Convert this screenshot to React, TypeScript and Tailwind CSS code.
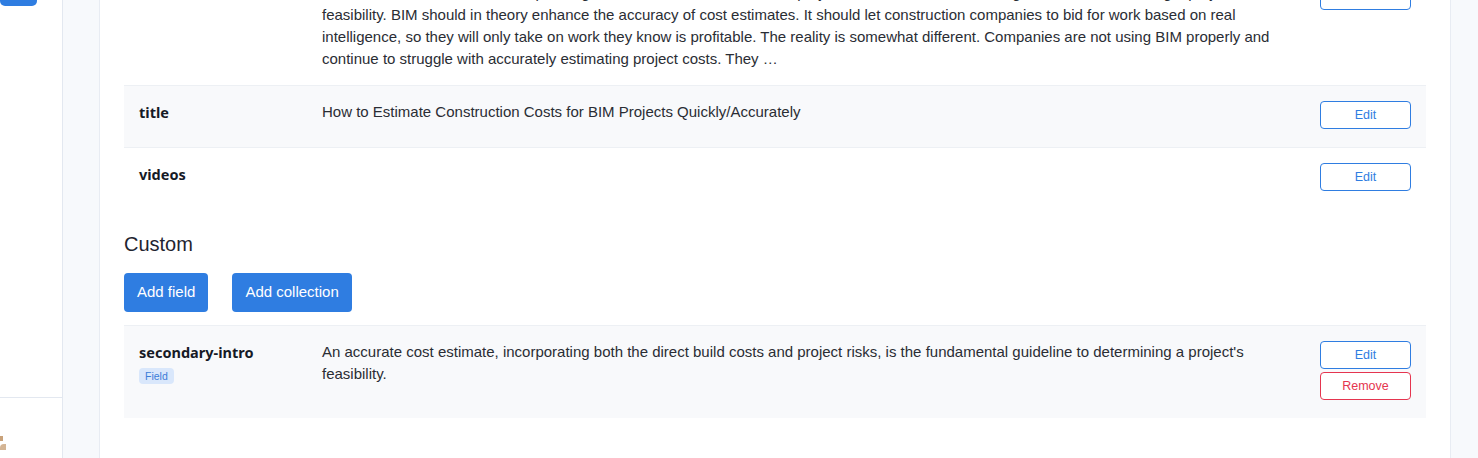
const intro =
  "An accurate cost estimate, incorporating both the direct build costs and project risks, is the fundamental guideline to determining a project's feasibility. BIM should in theory enhance the accuracy of cost estimates. It should let construction companies to bid for work based on real intelligence, so they will only take on work they know is profitable. The reality is somewhat different. Companies are not using BIM properly and continue to struggle with accurately estimating project costs. They …";

const sans = "font-['Liberation_Sans',Arial,sans-serif]";
const label = "font-['Noto_Sans','Open_Sans',sans-serif] font-bold";

function EditButton() {
  return (
    <button className="h-7 w-[91px] rounded border border-[#2f7de1] bg-white text-[12.5px] text-[#2f7de1]">
      Edit
    </button>
  );
}

function RemoveButton() {
  return (
    <button className="h-7 w-[91px] rounded border border-[#e5354f] bg-white text-[12.5px] text-[#e5354f]">
      Remove
    </button>
  );
}

function FieldRow({
  name,
  value,
  gray,
  badge,
  remove,
}: {
  name: string;
  value?: string;
  gray?: boolean;
  badge?: boolean;
  remove?: boolean;
}) {
  return (
    <div
      className={`flex border-t border-[#edf0f4] py-[15px] px-[15px] ${
        gray ? "bg-[#f8f9fb]" : "bg-white"
      }`}
    >
      <div className="w-[183px] shrink-0">
        <div className={`${label} text-[14.5px] leading-[22px] text-[#161a26]`}>{name}</div>
        {badge && (
          <span className="mt-[4px] inline-block rounded-[4px] bg-[#d9e7fb] px-[6px] text-[10.5px] leading-[16px] text-[#3b7dd8]">
            Field
          </span>
        )}
      </div>
      <div className="w-[965px] shrink-0 text-[15px] leading-[22px] text-[#2a2d34]">{value}</div>
      <div className="ml-auto flex flex-col gap-[3px] pb-[3px]">
        <EditButton />
        {remove && <RemoveButton />}
      </div>
    </div>
  );
}

export default function App() {
  return (
    <div className={`flex h-[458px] overflow-hidden bg-[#f7f9fc] ${sans}`}>
      <aside className="flex w-[63px] shrink-0 flex-col border-r border-[#e3e8f0] bg-white">
        <div className="h-[6px] w-[37px] rounded-b-[5px] bg-[#2f7de1]" />
        <div className="mt-[391px] border-t border-[#e3e8f0]" />
        <div className="mt-[38px] h-[5px] w-[3px] bg-[#c9a27a]" />
        <div className="mt-[3px] h-[6px] w-[6px] rounded-tl-[4px] bg-[#c9a27a] opacity-80" />
      </aside>
      <main className="flex flex-1 flex-col pl-[36px] pr-[27px]">
        <div className="flex-1 border-x border-[#e8ecf3] bg-white px-6">
          <div className="-mt-[34px]">
            <FieldRow name="intro" value={intro} />
            <FieldRow
              name="title"
              gray
              value="How to Estimate Construction Costs for BIM Projects Quickly/Accurately"
            />
            <FieldRow name="videos" />
            <h2 className="mt-[21px] text-[20px] leading-[28px] text-[#1f2430]">Custom</h2>
            <div className="mt-[15px] flex gap-6">
              <button className="h-[39px] rounded-[4px] bg-[#2f7de1] px-[13px] text-[15px] text-white">
                Add field
              </button>
              <button className="h-[39px] rounded-[4px] bg-[#2f7de1] px-[13px] text-[15px] text-white">
                Add collection
              </button>
            </div>
            <div className="mt-[13px]">
              <FieldRow
                name="secondary-intro"
                gray
                badge
                remove
                value="An accurate cost estimate, incorporating both the direct build costs and project risks, is the fundamental guideline to determining a project's feasibility."
              />
            </div>
          </div>
        </div>
      </main>
    </div>
  );
}
